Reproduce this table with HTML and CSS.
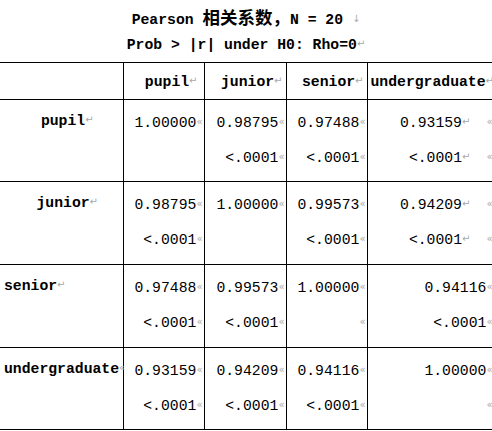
FILE: index.html
```html
<!DOCTYPE html>
<html lang="zh-CN">
<head>
    <meta charset="UTF-8">
    <title>Pearson 相关系数</title>
    <link rel="stylesheet" href="styles.css">
</head>
<body>
    <div class="page">
        <div class="caption">
            <p>Pearson <span class="wide">相关系数，</span>N = 20 <span class="mark">↓</span></p>
            <p>Prob &gt; |r| under H0: Rho=0<span class="mark">↵</span></p>
        </div>

        <table class="corr">
            <colgroup>
                <col class="c0">
                <col class="c1">
                <col class="c2">
                <col class="c3">
                <col class="c4">
            </colgroup>
            <thead>
                <tr>
                    <th></th>
                    <th class="h1">pupil<span class="mark">↵</span></th>
                    <th>junior<span class="mark">↵</span></th>
                    <th>senior<span class="mark">↵</span></th>
                    <th class="last">undergraduate<span class="mark">↵</span></th>
                </tr>
            </thead>
            <tbody>
                <tr class="r1">
                    <th class="label mid">pupil<span class="mark">↵</span></th>
                    <td><div>1.00000<span class="mark">«</span></div><div></div></td>
                    <td><div>0.98795<span class="mark">«</span></div><div>&lt;.0001<span class="mark">«</span></div></td>
                    <td><div>0.97488<span class="mark">«</span></div><div>&lt;.0001<span class="mark">«</span></div></td>
                    <td class="last"><div>0.93159<span class="mark">↵</span><span class="tail">«</span></div><div>&lt;.0001<span class="mark">↵</span><span class="tail">«</span></div></td>
                </tr>
                <tr class="r2">
                    <th class="label mid">junior<span class="mark">↵</span></th>
                    <td><div>0.98795<span class="mark">«</span></div><div>&lt;.0001<span class="mark">«</span></div></td>
                    <td><div>1.00000<span class="mark">«</span></div><div></div></td>
                    <td><div>0.99573<span class="mark">«</span></div><div>&lt;.0001<span class="mark">«</span></div></td>
                    <td class="last"><div>0.94209<span class="mark">↵</span><span class="tail">«</span></div><div>&lt;.0001<span class="mark">↵</span><span class="tail">«</span></div></td>
                </tr>
                <tr class="r3">
                    <th class="label">senior<span class="mark">↵</span></th>
                    <td><div>0.97488<span class="mark">«</span></div><div>&lt;.0001<span class="mark">«</span></div></td>
                    <td><div>0.99573<span class="mark">«</span></div><div>&lt;.0001<span class="mark">«</span></div></td>
                    <td><div>1.00000<span class="mark">«</span></div><div><span class="mark">«</span></div></td>
                    <td class="last"><div>0.94116<span class="mark">«</span></div><div>&lt;.0001<span class="mark">«</span></div></td>
                </tr>
                <tr class="r4">
                    <th class="label">undergraduate<span class="mark">«</span></th>
                    <td><div>0.93159<span class="mark">«</span></div><div>&lt;.0001<span class="mark">«</span></div></td>
                    <td><div>0.94209<span class="mark">«</span></div><div>&lt;.0001<span class="mark">«</span></div></td>
                    <td><div>0.94116<span class="mark">«</span></div><div>&lt;.0001<span class="mark">«</span></div></td>
                    <td class="last"><div>1.00000<span class="mark">«</span></div><div><span class="mark">«</span></div></td>
                </tr>
            </tbody>
        </table>
    </div>
</body>
</html>
```

FILE: styles.css
```css
body {
    margin: 0;
    font-family: "Liberation Mono", "Noto Sans CJK SC", monospace;
    font-size: 14.75px;
    color: #000;
    background-color: #fff;
    overflow: hidden;
}

.page {
    width: 492px;
    overflow: hidden;
}

.caption {
    padding-top: 8px;
    text-align: center;
    font-weight: bold;
}

.caption p {
    margin: 0;
    height: 25px;
    line-height: 25px;
}

.wide {
    font-size: 17.5px;
    line-height: 1;
}

.mark,
.tail {
    color: #a8a8a8;
    font-family: "DejaVu Sans", sans-serif;
    font-size: 10px;
    font-weight: normal;
    line-height: 1;
    vertical-align: 2px;
}

.tail {
    margin-left: 16px;
}

.corr {
    margin-top: 4px;
    border-collapse: collapse;
    table-layout: fixed;
    width: 502px;
}

.c0 { width: 123px; }
.c1 { width: 81px; }
.c2 { width: 82px; }
.c3 { width: 81px; }
.c4 { width: 135px; }

.corr th,
.corr td {
    border: 1px solid #000;
    padding: 0;
}

.corr tr > :first-child {
    border-left: none;
}

.corr thead tr {
    height: 37px;
}

.corr thead th {
    vertical-align: bottom;
    text-align: right;
    line-height: 20px;
    padding: 0 3px 7px 0;
    white-space: nowrap;
}

.corr thead th.h1 {
    padding-right: 6px;
}

.corr thead th.last {
    text-align: left;
    padding-left: 3px;
}

.corr tbody tr {
    height: 82px;
}

.corr tbody tr.r2,
.corr tbody tr.r3 {
    height: 83px;
}

.corr td {
    vertical-align: top;
    text-align: right;
    line-height: 35px;
    padding: 6px 1px 0 0;
    white-space: nowrap;
}

.corr td > div {
    height: 35px;
}

.corr td.last {
    padding-right: 9px;
}

.label {
    vertical-align: top;
    text-align: left;
    line-height: 35px;
    padding: 4px 0 0 4px !important;
    white-space: nowrap;
}

.label.mid {
    text-align: center;
    padding-left: 12px !important;
}
```
